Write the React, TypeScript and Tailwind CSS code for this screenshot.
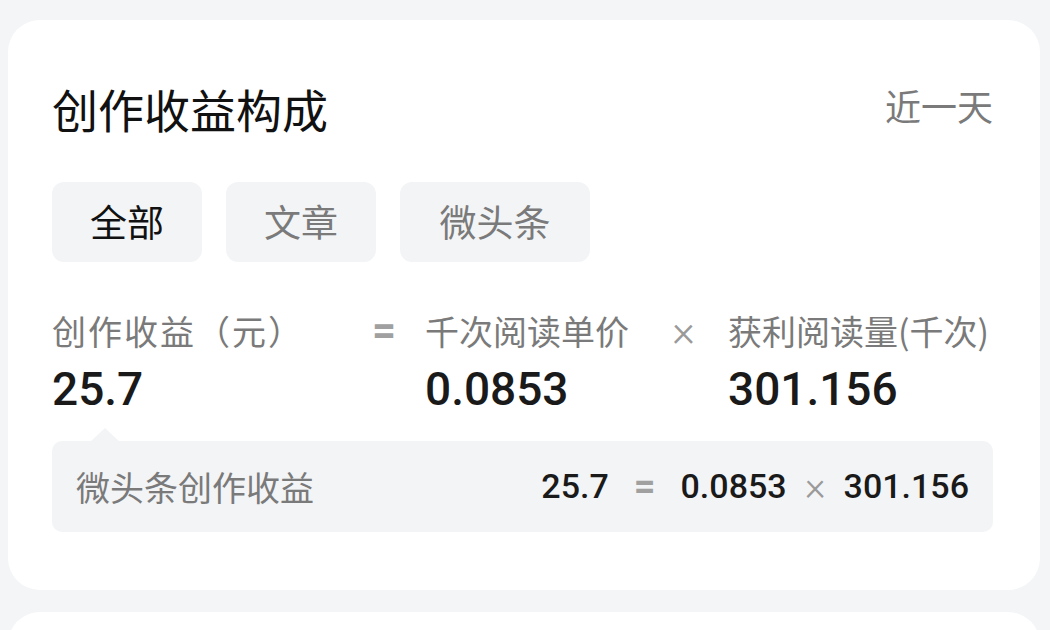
import React from 'react';

const cjk = { fontFamily: '"Noto Sans CJK SC", "Noto Sans", sans-serif' };
const num = { fontFamily: 'Roboto, "Noto Sans CJK SC", sans-serif' };

const tabs = [
  { label: '全部', active: true, w: 'w-[150px]' },
  { label: '文章', active: false, w: 'w-[150px]' },
  { label: '微头条', active: false, w: 'w-[190px]' },
];

const App: React.FC = () => (
  <div className="w-[1050px] h-[630px] overflow-hidden bg-[#f4f5f7] pt-[20px]" style={cjk}>
    {/* 收益构成卡片 */}
    <div className="ml-[8px] w-[1032px] h-[570px] bg-white rounded-[32px] pl-[44px] pr-[47px] pt-[65px]">
      <div className="flex items-start justify-between">
        <h2 className="text-[46px] leading-none text-[#111] font-normal">创作收益构成</h2>
        <span className="text-[36px] leading-none text-[#7a7a7a] pt-[2px]">近一天</span>
      </div>

      {/* Tabs */}
      <div className="flex gap-[24px] mt-[51px]">
        {tabs.map((t) => (
          <div
            key={t.label}
            className={`${t.w} h-[80px] rounded-[12px] bg-[#f3f4f6] flex items-center justify-center text-[37px] ${
              t.active ? 'text-[#111]' : 'text-[#7a7a7a]'
            }`}
          >
            {t.label}
          </div>
        ))}
      </div>

      {/* 公式 */}
      <div className="flex mt-[48px]">
        <div className="w-[320px]">
          <div className="text-[34px] leading-[42px] text-[#7a7a7a] tracking-[2px]">创作收益（元）</div>
          <div className="text-[46px] leading-[54px] mt-[10px] font-medium text-[#1a1a1a]" style={num}>25.7</div>
        </div>
        <div className="w-[53px] text-[42px] leading-[42px] font-bold text-[#a0a0a0]" style={num}>=</div>
        <div className="w-[250px]">
          <div className="text-[34px] leading-[42px] text-[#7a7a7a]">千次阅读单价</div>
          <div className="text-[46px] leading-[54px] mt-[10px] font-medium text-[#1a1a1a]" style={num}>0.0853</div>
        </div>
        <div className="w-[53px] text-[44px] leading-[42px] font-light text-[#9a9a9a] -ml-[3px] pr-[3px] box-content" style={num}>×</div>
        <div className="flex-1">
          <div className="text-[34px] leading-[42px] text-[#7a7a7a] whitespace-nowrap">获利阅读量(千次)</div>
          <div className="text-[46px] leading-[54px] mt-[10px] font-medium text-[#1a1a1a]" style={num}>301.156</div>
        </div>
      </div>

      {/* 明细 */}
      <div className="relative mt-[25px]">
        <div className="absolute left-[38px] -top-[13px] w-0 h-0 border-l-[15px] border-r-[15px] border-b-[14px] border-l-transparent border-r-transparent border-b-[#f3f4f6]" />
        <div className="h-[91px] rounded-[10px] bg-[#f3f4f6] flex items-center justify-between pl-[24px] pr-[24px]">
          <span className="text-[34px] text-[#7a7a7a]">微头条创作收益</span>
          <div className="flex items-center text-[34px] font-medium text-[#1a1a1a]" style={num}>
            <span>25.7</span>
            <span className="mx-[25px] text-[#a0a0a0] font-bold text-[38px]">=</span>
            <span>0.0853</span>
            <span className="mx-[18px] text-[#9a9a9a] font-light text-[40px] leading-none">×</span>
            <span>301.156</span>
          </div>
        </div>
      </div>
    </div>

    {/* 下一张卡片 */}
    <div className="ml-[8px] mt-[22px] w-[1032px] h-[60px] bg-white rounded-t-[32px]" />
  </div>
);

export default App;
